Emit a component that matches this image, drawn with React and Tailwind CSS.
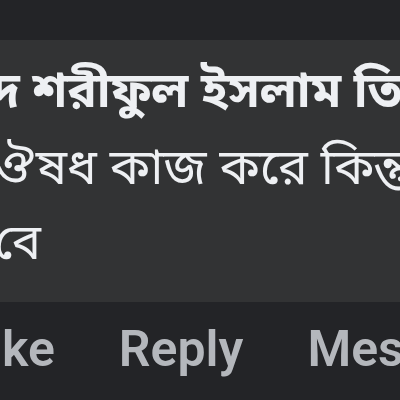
import React from "react";

const bn = { fontFamily: '"Noto Sans Bengali", "Noto Sans", "Liberation Sans", sans-serif' };

const App = () => {
  return (
    <div className="w-[400px] h-[400px] overflow-hidden bg-[#232427] flex flex-col">
      {/* top strip above the bubble */}
      <div className="h-[40px] shrink-0 bg-[#232427]"></div>

      {/* comment bubble */}
      <div className="h-[262px] shrink-0 bg-[#323334] overflow-hidden pt-[17px]">
        <div className="text-[#eef0f3] whitespace-nowrap text-[49px] leading-[76px]" style={bn}>
          <p className="ml-[-8px] font-bold">দ শরীফুল ইসলাম তিতাস</p>
          <p className="ml-[-8px] text-[50px]">ঔষধ কাজ করে কিন্তু</p>
          <p className="ml-[-6px]">বে</p>
        </div>
      </div>

      {/* actions row */}
      <div className="flex-1 flex items-start pt-[10px] ml-[-38px] gap-[64px] text-[#b4b7bc] text-[50px] font-semibold whitespace-nowrap" style={{ fontFamily: '"Roboto", "Liberation Sans", sans-serif' }}>
        <span>Like</span>
        <span>Reply</span>
        <span>Message</span>
      </div>
    </div>
  );
};

export default App;
